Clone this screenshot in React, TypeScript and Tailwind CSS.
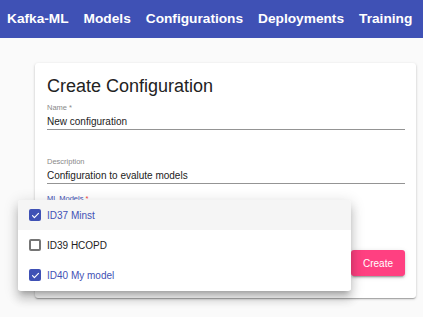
import React from "react";

function Check({ checked }: { checked: boolean }) {
  if (checked) {
    return (
      <span className="flex h-[12px] w-[12px] items-center justify-center rounded-[2px] bg-[#3f51b5]">
        <svg width="9" height="9" viewBox="0 0 24 24" fill="none">
          <path d="M4 12.5l5 5L20 6.5" stroke="white" strokeWidth="3.2" strokeLinecap="round" strokeLinejoin="round" />
        </svg>
      </span>
    );
  }
  return <span className="block h-[12px] w-[12px] rounded-[2px] border-[2px] border-[#757575] bg-white" />;
}

export default function App() {
  const items = [
    { label: "ID37 Minst", checked: true, hl: true },
    { label: "ID39 HCOPD", checked: false, hl: false },
    { label: "ID40 My model", checked: true, hl: false },
  ];
  return (
    <div className="relative h-[317px] w-[423px] overflow-hidden bg-[#fafafa] font-['Liberation_Sans',Arial,sans-serif]">
      <div className="flex h-[38px] items-center gap-[15px] whitespace-nowrap bg-[#3f51b5] px-[7px] text-[13.7px] font-bold leading-none text-white">
        <span>Kafka-ML</span>
        <span>Models</span>
        <span>Configurations</span>
        <span>Deployments</span>
        <span>Training</span>
      </div>

      <div className="ml-[35px] mt-[25px] w-[381px] rounded-[3px] bg-white px-[12px] pb-[22px] pt-[14px] shadow-[0_1px_3px_rgba(0,0,0,0.2),0_1px_1px_rgba(0,0,0,0.14),0_2px_1px_-1px_rgba(0,0,0,0.12)]">
        <h1 className="text-[18px] font-normal leading-[18px] text-[#222]">Create Configuration</h1>

        <div className="mt-[8px] text-[7.5px] leading-[9px] text-[#8a8a8a]">Name *</div>
        <div className="mt-[2px] flex h-[16px] w-[358px] items-center border-b border-[#949494] text-[10px] text-[#222]">
          New configuration
        </div>

        <div className="mt-[27px] text-[7.5px] leading-[9px] text-[#8a8a8a]">Description</div>
        <div className="mt-[2px] flex h-[16px] w-[358px] items-center border-b border-[#949494] text-[10px] text-[#222]">
          Configuration to evalute models
        </div>

        <div className="mt-[10px] text-[7.5px] leading-[9px] text-[#3f51b5]">
          ML Models <span className="text-[#f44336]">*</span>
        </div>
        <div className="mt-[2px] h-[16px] w-[300px]" />

        <div className="mt-[29px] flex w-[358px] justify-end">
          <button className="flex h-[26px] w-[54px] items-center justify-center rounded-[3px] bg-[#ff4081] text-[10px] font-medium text-white shadow-[0_3px_1px_-2px_rgba(0,0,0,0.2),0_2px_2px_rgba(0,0,0,0.14),0_1px_5px_rgba(0,0,0,0.12)]">
            Create
          </button>
        </div>
      </div>

      <div className="absolute left-[18px] top-[200px] w-[333px] overflow-hidden rounded-[3px] bg-white pb-[1px] shadow-[0_5px_5px_-3px_rgba(0,0,0,0.2),0_8px_10px_1px_rgba(0,0,0,0.14),0_3px_14px_2px_rgba(0,0,0,0.12)]">
        {items.map((it) => (
          <div
            key={it.label}
            className={`flex h-[30px] items-center gap-[6px] pl-[11px] text-[10px] ${it.hl ? "bg-[#f5f5f5]" : "bg-white"} ${it.checked ? "text-[#3f51b5]" : "text-[#222]"}`}
          >
            <Check checked={it.checked} />
            <span>{it.label}</span>
          </div>
        ))}
      </div>
    </div>
  );
}
